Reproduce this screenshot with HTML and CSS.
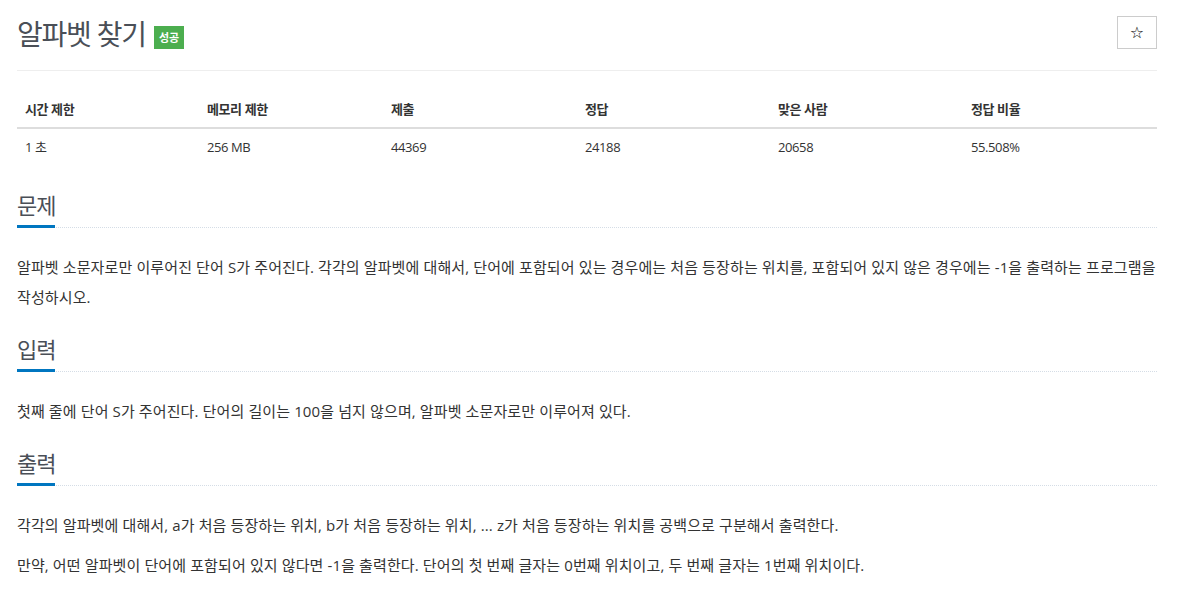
FILE: index.html
```html
<!DOCTYPE html>
<html lang="ko">
<head>
<meta charset="utf-8">
<title>알파벳 찾기</title>
<link rel="stylesheet" href="styles.css">
</head>
<body>
<div class="page">
  <div class="title-row">
    <h1 class="title">알파벳 찾기<span class="badge">성공</span></h1>
    <button class="star-btn" type="button">☆</button>
  </div>
  <div class="divider"></div>
  <table class="info">
    <thead>
      <tr><th class="c1">시간 제한</th><th class="c2">메모리 제한</th><th class="c3">제출</th><th class="c4">정답</th><th class="c5">맞은 사람</th><th class="c6">정답 비율</th></tr>
    </thead>
    <tbody>
      <tr><td>1 초</td><td>256 MB</td><td>44369</td><td>24188</td><td>20658</td><td>55.508%</td></tr>
    </tbody>
  </table>

  <section class="section">
    <div class="headline"><h2>문제</h2></div>
    <p>알파벳 소문자로만 이루어진 단어 S가 주어진다. 각각의 알파벳에 대해서, 단어에 포함되어 있는 경우에는 처음 등장하는 위치를, 포함되어 있지 않은 경우에는 -1을 출력하는 프로그램을 작성하시오.</p>
  </section>
  <section class="section">
    <div class="headline"><h2>입력</h2></div>
    <p>첫째 줄에 단어 S가 주어진다. 단어의 길이는 100을 넘지 않으며, 알파벳 소문자로만 이루어져 있다.</p>
  </section>
  <section class="section">
    <div class="headline"><h2>출력</h2></div>
    <p>각각의 알파벳에 대해서, a가 처음 등장하는 위치, b가 처음 등장하는 위치, ... z가 처음 등장하는 위치를 공백으로 구분해서 출력한다.</p>
    <p>만약, 어떤 알파벳이 단어에 포함되어 있지 않다면 -1을 출력한다. 단어의 첫 번째 글자는 0번째 위치이고, 두 번째 글자는 1번째 위치이다.</p>
  </section>
</div>
</body>
</html>
```
FILE: styles.css
```css
html, body {
  margin: 0;
  padding: 0;
  background: #fff;
}
body {
  font-family: "Open Sans", "Noto Sans CJK KR", sans-serif;
  color: #333;
  font-size: 14px;
}
.page {
  width: 1140px;
  margin-left: 17px;
}
.title-row {
  display: flex;
  justify-content: space-between;
  align-items: flex-start;
  padding-top: 16px;
  height: 38px;
}
.title {
  margin: 0;
  font-size: 28px;
  font-weight: 400;
  line-height: 36px;
  color: #4a4f57;
  letter-spacing: -1.2px;
  display: flex;
  align-items: center;
}
.badge {
  display: inline-block;
  margin-left: 8px;
  margin-top: 6px;
  letter-spacing: 0;
  background: #4cae4f;
  color: #fff;
  font-size: 11px;
  font-weight: 700;
  line-height: 23px;
  height: 23px;
  padding: 0 5px;
}
.star-btn {
  width: 40px;
  height: 33px;
  border: 1px solid #ccc;
  background: #fff;
  color: #000;
  font-size: 16px;
  padding: 0;
  font-family: "DejaVu Sans", sans-serif;
  cursor: pointer;
}
.divider {
  border-top: 1px solid #eee;
  margin-top: 16px;
  margin-bottom: 20px;
}
.info {
  width: 100%;
  border-collapse: collapse;
  font-size: 13px;
  letter-spacing: -0.4px;
}
.info th, .info td {
  text-align: left;
  padding: 8px 8px;
  line-height: 20px;
}
.info th {
  font-weight: 700;
  border-bottom: 2px solid #ddd;
}
.info td {
  color: #333;
}
.c1 { width: 166px; }
.c2 { width: 168px; }
.c3 { width: 178px; }
.c4 { width: 177px; }
.c5 { width: 177px; }
.section {
  margin-top: 25px;
}
.section + .section {
  margin-top: 22px;
}
.headline {
  border-bottom: 1px dotted #d5dde6;
  height: 37px;
}
.headline h2 {
  display: inline-block;
  margin: 0;
  font-size: 22px;
  font-weight: 400;
  line-height: 30px;
  letter-spacing: -1px;
  color: #4a4f57;
  padding-bottom: 5px;
  border-bottom: 3px solid #0076c0;
}
.section p {
  margin: 24px 0 0;
  font-size: 15px;
  line-height: 30px;
  letter-spacing: 0.12px;
  color: #333;
}
.section p + p {
  margin-top: 10px;
}
```
